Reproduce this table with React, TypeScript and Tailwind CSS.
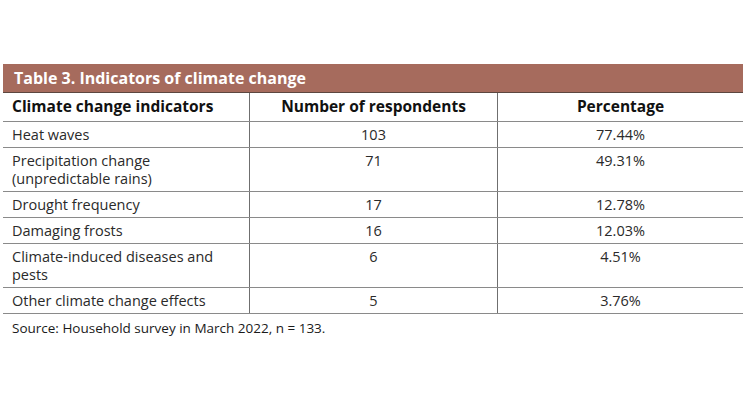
import React from 'react';

const rows = [
  { label: ['Heat waves'], count: '103', pct: '77.44%' },
  { label: ['Precipitation change', '(unpredictable rains)'], count: '71', pct: '49.31%' },
  { label: ['Drought frequency'], count: '17', pct: '12.78%' },
  { label: ['Damaging frosts'], count: '16', pct: '12.03%' },
  { label: ['Climate-induced diseases and', 'pests'], count: '6', pct: '4.51%' },
  { label: ['Other climate change effects'], count: '5', pct: '3.76%' },
];

const App: React.FC = () => {
  return (
    <div
      className="w-[750px] h-[400px] bg-white pt-[64px] pl-[3px] text-[#222]"
      style={{ fontFamily: '"Open Sans", "Noto Sans", sans-serif' }}
    >
      <div className="w-[740px]">
        {/* Title bar */}
        <div className="h-[29px] bg-[#a66b5d] border-b border-[#5c4740] flex items-center pl-[11px]">
          <span className="text-white font-bold text-[16px] leading-none">Table 3. Indicators of climate change</span>
        </div>

        {/* Column headings */}
        <div className="grid grid-cols-[247px_248px_245px] h-[29px] border-b border-[#8a8a8a] font-bold text-[15.5px] text-[#111]">
          <div className="border-r-[1.5px] border-[#6f6f6f] flex items-center pl-[9px]">Climate change indicators</div>
          <div className="border-r-[1.5px] border-[#6f6f6f] flex items-center justify-center">Number of respondents</div>
          <div className="flex items-center justify-center">Percentage</div>
        </div>

        {/* Data rows */}
        {rows.map((r, i) => (
          <div
            key={i}
            className="grid grid-cols-[247px_248px_245px] border-b border-[#8a8a8a] text-[14.5px] leading-[18px] text-[#2a2a2a]"
          >
            <div className="border-r-[1.5px] border-[#6f6f6f] pl-[9px] pt-[4px] pb-[3px]">
              {r.label.map((l, j) => (
                <div key={j}>{l}</div>
              ))}
            </div>
            <div className="border-r-[1.5px] border-[#6f6f6f] text-center pt-[4px] pb-[3px]">{r.count}</div>
            <div className="text-center pt-[4px] pb-[3px]">{r.pct}</div>
          </div>
        ))}

        <p className="text-[13.5px] pl-[9px] pt-[4px] text-[#1a1a1a]">Source: Household survey in March 2022, n = 133.</p>
      </div>
    </div>
  );
};

export default App;
